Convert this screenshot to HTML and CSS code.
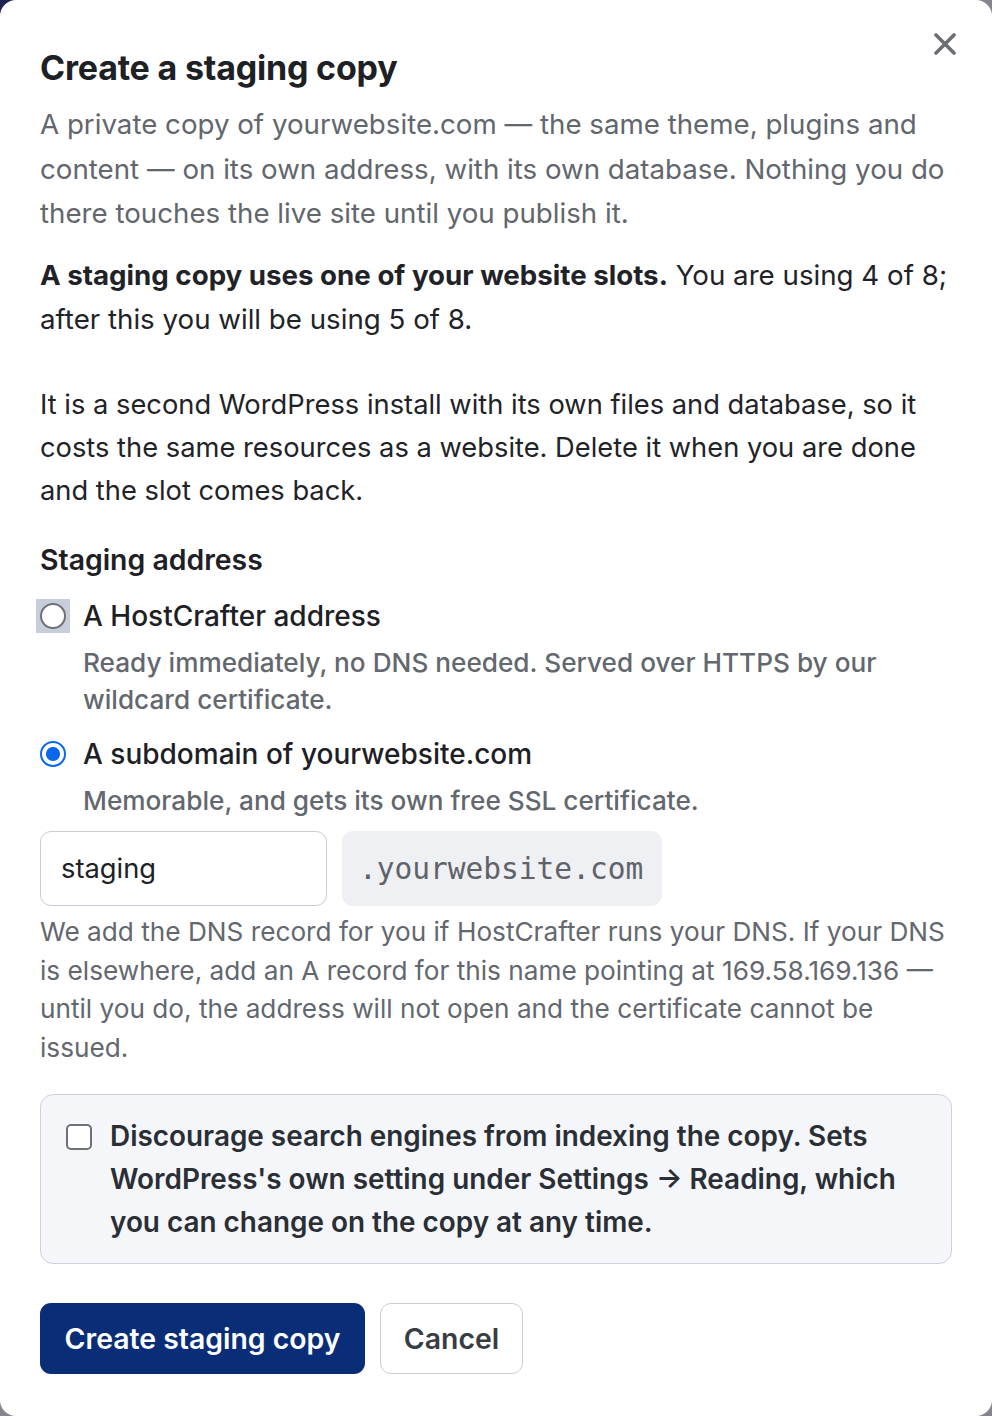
FILE: index.html
```html
<!DOCTYPE html>
<html lang="en">
<head>
<meta charset="utf-8">
<title>Create a staging copy</title>
<link rel="stylesheet" href="styles.css">
</head>
<body>
<div class="modal">
  <button class="close" aria-label="Close">
    <svg width="22" height="22" viewBox="0 0 22 22"><path d="M2 2 L20 20 M20 2 L2 20" stroke="#6b6e74" stroke-width="3.6" stroke-linecap="round"/></svg>
  </button>
  <h1 class="title">Create a staging copy</h1>
  <p class="intro">A private copy of yourwebsite.com — the same theme, plugins and content — on its own address, with its own database. Nothing you do there touches the live site until you publish it.</p>
  <p class="slots"><strong>A staging copy uses one of your website slots.</strong> You are using 4 of 8; after this you will be using 5 of 8.</p>
  <p class="explain">It is a second WordPress install with its own files and database, so it costs the same resources as a website. Delete it when you are done and the slot comes back.</p>

  <h2 class="section">Staging address</h2>

  <div class="option">
    <div class="option-row">
      <span class="radio-wrap focus"><span class="radio"></span></span>
      <span class="option-label">A HostCrafter address</span>
    </div>
    <p class="option-desc">Ready immediately, no DNS needed. Served over HTTPS by our wildcard certificate.</p>
  </div>

  <div class="option">
    <div class="option-row">
      <span class="radio-wrap"><span class="radio checked"></span></span>
      <span class="option-label">A subdomain of yourwebsite.com</span>
    </div>
    <p class="option-desc">Memorable, and gets its own free SSL certificate.</p>
  </div>

  <div class="domain-row">
    <div class="input">staging</div>
    <div class="suffix">.yourwebsite.com</div>
  </div>
  <p class="help">We add the DNS record for you if HostCrafter runs your DNS. If your DNS is elsewhere, add an A record for this name pointing at 169.58.169.136 — until you do, the address will not open and the certificate cannot be issued.</p>

  <div class="panel">
    <span class="checkbox"></span>
    <span class="panel-text">Discourage search engines from indexing the copy. Sets WordPress's own setting under Settings → Reading, which you can change on the copy at any time.</span>
  </div>

  <div class="actions">
    <button class="btn btn-primary">Create staging copy</button>
    <button class="btn btn-secondary">Cancel</button>
  </div>
</div>
</body>
</html>
```
FILE: styles.css
```css
html, body {
  margin: 0;
  padding: 0;
}
body {
  background: #85868d;
  background-image: linear-gradient(135deg, #1e2452 0, #1e2452 3%, transparent 6%);
  font-family: Inter, "Noto Sans", "Liberation Sans", sans-serif;
  color: #1f2328;
}
.modal {
  position: relative;
  box-sizing: border-box;
  width: 992px;
  min-height: 1416px;
  background: #ffffff;
  border-radius: 16px;
  padding: 48px 40px 40px 40px;
}
.close {
  position: absolute;
  top: 33px;
  left: 934px;
  width: 22px;
  height: 22px;
  padding: 0;
  border: 0;
  background: none;
  display: flex;
}
.title {
  margin: 0 0 14px 0;
  font-size: 34px;
  line-height: 40px;
  font-weight: 700;
  color: #1d2025;
  letter-spacing: -0.2px;
}
.intro {
  margin: 0 0 17px 0;
  font-size: 27.7px;
  line-height: 44.5px;
  color: #62666d;
}
.slots {
  margin: 0 0 42px 0;
  font-size: 27.7px;
  line-height: 44px;
  color: #1f2328;
}
.slots strong {
  font-weight: 700;
}
.explain {
  margin: 0 0 28px 0;
  font-size: 27.3px;
  line-height: 43px;
  color: #1f2328;
}
.section {
  margin: 0 0 16px 0;
  font-size: 28.4px;
  line-height: 40px;
  font-weight: 600;
  color: #1d2025;
}
.option {
  margin-bottom: 15px;
}
.option-row {
  display: flex;
  align-items: center;
  gap: 13px;
  height: 40px;
}
.radio-wrap {
  width: 34px;
  height: 34px;
  margin-left: -4px;
  display: flex;
  align-items: center;
  justify-content: center;
}
.radio-wrap.focus {
  background: #c7cdda;
}
.radio {
  box-sizing: border-box;
  width: 26px;
  height: 26px;
  border-radius: 50%;
  border: 2px solid #6e7178;
  background: #fff;
}
.radio.checked {
  border: 2.5px solid #0b67ee;
  background: radial-gradient(circle, #0b67ee 0, #0b67ee 6.5px, #ffffff 7.5px);
}
.option-label {
  font-size: 28px;
  font-weight: 500;
  color: #1d2025;
}
.option-desc {
  margin: 8px 0 0 43px;
  font-size: 26.2px;
  line-height: 37.5px;
  font-weight: 500;
  color: #63676e;
}
.domain-row {
  display: flex;
  gap: 15px;
  margin-top: -3px;
  height: 75px;
}
.input {
  box-sizing: border-box;
  width: 287px;
  height: 75px;
  border: 1.5px solid #c9cdd5;
  border-radius: 11px;
  padding: 0 20px;
  display: flex;
  align-items: center;
  font-size: 27.3px;
  color: #1d2025;
}
.suffix {
  box-sizing: border-box;
  height: 75px;
  padding: 0 19px 0 17px;
  background: #eef0f4;
  border-radius: 11px;
  display: flex;
  align-items: center;
  font-family: "DejaVu Sans Mono", "Liberation Mono", monospace;
  font-size: 29.5px;
  color: #5f6369;
}
.help {
  margin: 7px 0 26px 0;
  font-size: 26.2px;
  line-height: 38.7px;
  color: #63676e;
}
.panel {
  box-sizing: border-box;
  display: flex;
  gap: 18px;
  align-items: flex-start;
  background: #f5f6fa;
  border: 1.5px solid #ccd1dd;
  border-radius: 13px;
  padding: 20px 24px 18px 25px;
  min-height: 170px;
}
.checkbox {
  flex: none;
  box-sizing: border-box;
  width: 26px;
  height: 26px;
  margin-top: 9px;
  border: 2px solid #6e7178;
  border-radius: 5px;
  background: #fff;
}
.panel-text {
  font-size: 27.9px;
  line-height: 43px;
  font-weight: 600;
  color: #2a2e35;
}
.actions {
  display: flex;
  gap: 15px;
  margin-top: 39px;
}
.btn {
  box-sizing: border-box;
  height: 71px;
  border-radius: 11px;
  padding: 0 20px;
  font-family: Inter, "Noto Sans", "Liberation Sans", sans-serif;
  font-size: 28.4px;
  font-weight: 600;
  cursor: pointer;
}
.btn-primary {
  width: 325px;
  background: #0a2d78;
  color: #ffffff;
  border: 0;
}
.btn-secondary {
  width: 143px;
  background: #ffffff;
  color: #383c43;
  border: 1.5px solid #c9cdd5;
}
```
